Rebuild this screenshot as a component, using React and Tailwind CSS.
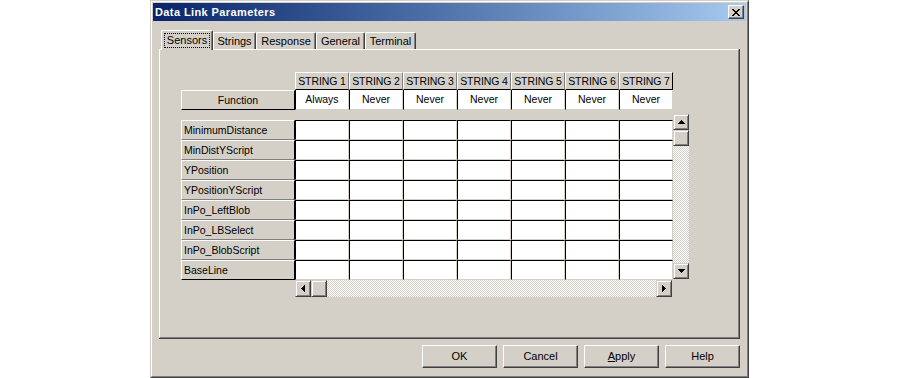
import React from "react";

const cols = ["STRING 1", "STRING 2", "STRING 3", "STRING 4", "STRING 5", "STRING 6", "STRING 7"];
const vals = ["Always", "Never", "Never", "Never", "Never", "Never", "Never"];
const labels = [
  "MinimumDistance",
  "MinDistYScript",
  "YPosition",
  "YPositionYScript",
  "InPo_LeftBlob",
  "InPo_LBSelect",
  "InPo_BlobScript",
  "BaseLine",
];

function Arrow({ dir }) {
  if (dir === "up")
    return (
      <svg width="7" height="4" viewBox="0 0 7 4" shapeRendering="crispEdges">
        <path d="M3 0h1v1h1v1h1v1h1v1H0V3h1V2h1V1h1z" fill="#000" />
      </svg>
    );
  if (dir === "down")
    return (
      <svg width="7" height="4" viewBox="0 0 7 4" shapeRendering="crispEdges">
        <path d="M0 0h7v1H6v1H5v1H4v1H3V3H2V2H1V1H0z" fill="#000" />
      </svg>
    );
  if (dir === "left")
    return (
      <svg width="4" height="7" viewBox="0 0 4 7" shapeRendering="crispEdges">
        <path d="M3 0h1v7H3V6H2V5H1V4H0V3h1V2h1V1h1z" fill="#000" />
      </svg>
    );
  return (
    <svg width="4" height="7" viewBox="0 0 4 7" shapeRendering="crispEdges">
      <path d="M0 0h1v1h1v1h1v1h1v1H3v1H2v1H1v1H0z" fill="#000" />
    </svg>
  );
}

function ScrollBtn({ dir, h = "h-[16px]" }) {
  return (
    <div
      className={`w-[16px] ${h} shrink-0 bg-[#d4d0c8] border border-t-[#d4d0c8] border-l-[#d4d0c8] border-r-[#404040] border-b-[#404040] shadow-[inset_1px_1px_0_#ffffff,inset_-1px_-1px_0_#808080] flex items-center justify-center`}
    >
      {dir ? <Arrow dir={dir} /> : null}
    </div>
  );
}

const xRows = [
  [0, 1, 6, 7],
  [1, 2, 5, 6],
  [2, 3, 4, 5],
  [3, 4],
  [2, 3, 4, 5],
  [1, 2, 5, 6],
  [0, 1, 6, 7],
];

function CloseX() {
  return (
    <svg width="8" height="7" viewBox="0 0 8 7" shapeRendering="crispEdges">
      {xRows.map((r, y) =>
        r.map((x) => <rect key={`${y}-${x}`} x={x} y={y} width="1" height="1" fill="#000" />)
      )}
    </svg>
  );
}

function Button({ children }) {
  return (
    <div className="w-[75px] h-[23px] bg-[#d4d0c8] border border-t-white border-l-white border-r-[#404040] border-b-[#404040] shadow-[inset_-1px_-1px_0_#808080] flex items-center justify-center text-[11px] text-black">
      {children}
    </div>
  );
}

function Tab({ children, selected, w }) {
  if (selected)
    return (
      <div
        className={`${w} h-[20px] mb-[-1px] relative z-10 bg-[#d4d0c8] border-t border-l border-white border-r border-r-[#404040] shadow-[inset_-1px_0_0_#808080] rounded-t-[2px] flex justify-center pt-[2px]`}
      >
        <div className="h-[15px] px-[2px] border border-dotted border-black flex items-center text-[11px] leading-none">
          {children}
        </div>
      </div>
    );
  return (
    <div
      className={`${w} h-[17px] bg-[#d4d0c8] border-t border-l border-white border-r border-r-[#404040] shadow-[inset_-1px_0_0_#808080] rounded-t-[2px] flex items-center justify-center text-[11px] leading-none`}
    >
      {children}
    </div>
  );
}

export default function App() {
  return (
    <div className="w-[900px] h-[378px] bg-white font-['Liberation_Sans',Arial,sans-serif] text-black overflow-hidden">
      <div className="ml-[150px] w-[599px] h-[378px] border border-t-[#d4d0c8] border-l-[#d4d0c8] border-r-[#404040] border-b-[#404040]">
        <div className="w-full h-full border border-t-white border-l-white border-r-[#808080] border-b-[#808080] bg-[#d4d0c8] p-[1px] flex flex-col">
          {/* title bar */}
          <div className="h-[18px] shrink-0 bg-gradient-to-r from-[#0a246a] to-[#a6caf0] flex items-center justify-between pl-[2px] pr-[2px]">
            <span className="text-white font-bold text-[11px] tracking-[0.4px] leading-none">Data Link Parameters</span>
            <div className="w-[16px] h-[14px] bg-[#d4d0c8] border border-t-white border-l-white border-r-[#404040] border-b-[#404040] shadow-[inset_-1px_-1px_0_#808080] flex items-center justify-center">
              <CloseX />
            </div>
          </div>

          {/* tabs */}
          <div className="mt-[9px] ml-[8px] h-[19px] flex items-end">
            <Tab selected w="w-[52px]">Sensors</Tab>
            <Tab w="w-[43px]">Strings</Tab>
            <Tab w="w-[60px]">Response</Tab>
            <Tab w="w-[49px]">General</Tab>
            <Tab w="w-[51px]">Terminal</Tab>
          </div>

          {/* panel */}
          <div className="ml-[6px] w-[581px] h-[290px] border-r border-b border-[#404040]">
            <div className="w-full h-full border-t border-l border-white border-r border-b border-r-[#808080] border-b-[#808080] pl-[21px] pt-[22px] text-[10.5px]">
              {/* header */}
              <div className="flex ml-[114px]">
                {cols.map((c, i) => (
                  <div
                    key={c}
                    className={`w-[54px] h-[18px] bg-[#d4d0c8] border-t border-l border-white border-b border-b-black border-r ${
                      i === 6 ? "border-r-black" : "border-r-[#808080]"
                    } flex items-center justify-center leading-none whitespace-nowrap tracking-[-0.1px]`}
                  >
                    {c}
                  </div>
                ))}
              </div>
              {/* function row */}
              <div className="flex">
                <div className="w-[114px] h-[20px] bg-[#d4d0c8] border-t border-l border-white border-r border-b border-r-black border-b-black flex items-center justify-center leading-none">
                  Function
                </div>
                {vals.map((v, i) => (
                  <div
                    key={i}
                    className="w-[54px] h-[20px] bg-white border-l border-black border-r border-b border-r-[#d4d0c8] border-b-[#d4d0c8] flex items-center justify-center leading-none"
                  >
                    {v}
                  </div>
                ))}
              </div>

              {/* data area */}
              <div className="mt-[4px] flex items-start">
                <div className="mt-[6px] flex flex-col">
                  {labels.map((l, i) => (
                    <div
                      key={l}
                      className={`w-[114px] h-[20px] bg-[#d4d0c8] border-t border-l border-white border-r border-r-black border-b ${
                        i === labels.length - 1 ? "border-b-black" : "border-b-[#808080]"
                      } flex items-center pl-[2px] leading-none`}
                    >
                      {l}
                    </div>
                  ))}
                </div>
                <div className="mt-[6px] grid grid-cols-7 w-[378px]">
                  {labels.map((l) =>
                    cols.map((c) => (
                      <div
                        key={l + c}
                        className="h-[20px] bg-white border-t border-l border-black border-r border-b border-r-[#d4d0c8] border-b-[#d4d0c8]"
                      />
                    ))
                  )}
                </div>
                <div className="w-[16px] h-[165px] flex flex-col">
                  <ScrollBtn dir="up" />
                  <ScrollBtn />
                  <div className="flex-1 bg-[image:repeating-conic-gradient(#d4d0c8_0_25%,#ffffff_0_50%)] bg-[length:2px_2px]" />
                  <ScrollBtn dir="down" />
                </div>
              </div>

              {/* horizontal scroll */}
              <div className="ml-[114px] w-[377px] h-[17px] flex">
                <ScrollBtn dir="left" h="h-[17px]" />
                <ScrollBtn h="h-[17px]" />
                <div className="flex-1 bg-[image:repeating-conic-gradient(#d4d0c8_0_25%,#ffffff_0_50%)] bg-[length:2px_2px]" />
                <ScrollBtn dir="right" h="h-[17px]" />
              </div>
            </div>
          </div>

          {/* buttons */}
          <div className="mt-[6px] flex justify-end gap-[6px] pr-[6px]">
            <Button>OK</Button>
            <Button>Cancel</Button>
            <Button>
              <span>
                <span className="underline underline-offset-[1px]">A</span>pply
              </span>
            </Button>
            <Button>Help</Button>
          </div>
        </div>
      </div>
    </div>
  );
}
